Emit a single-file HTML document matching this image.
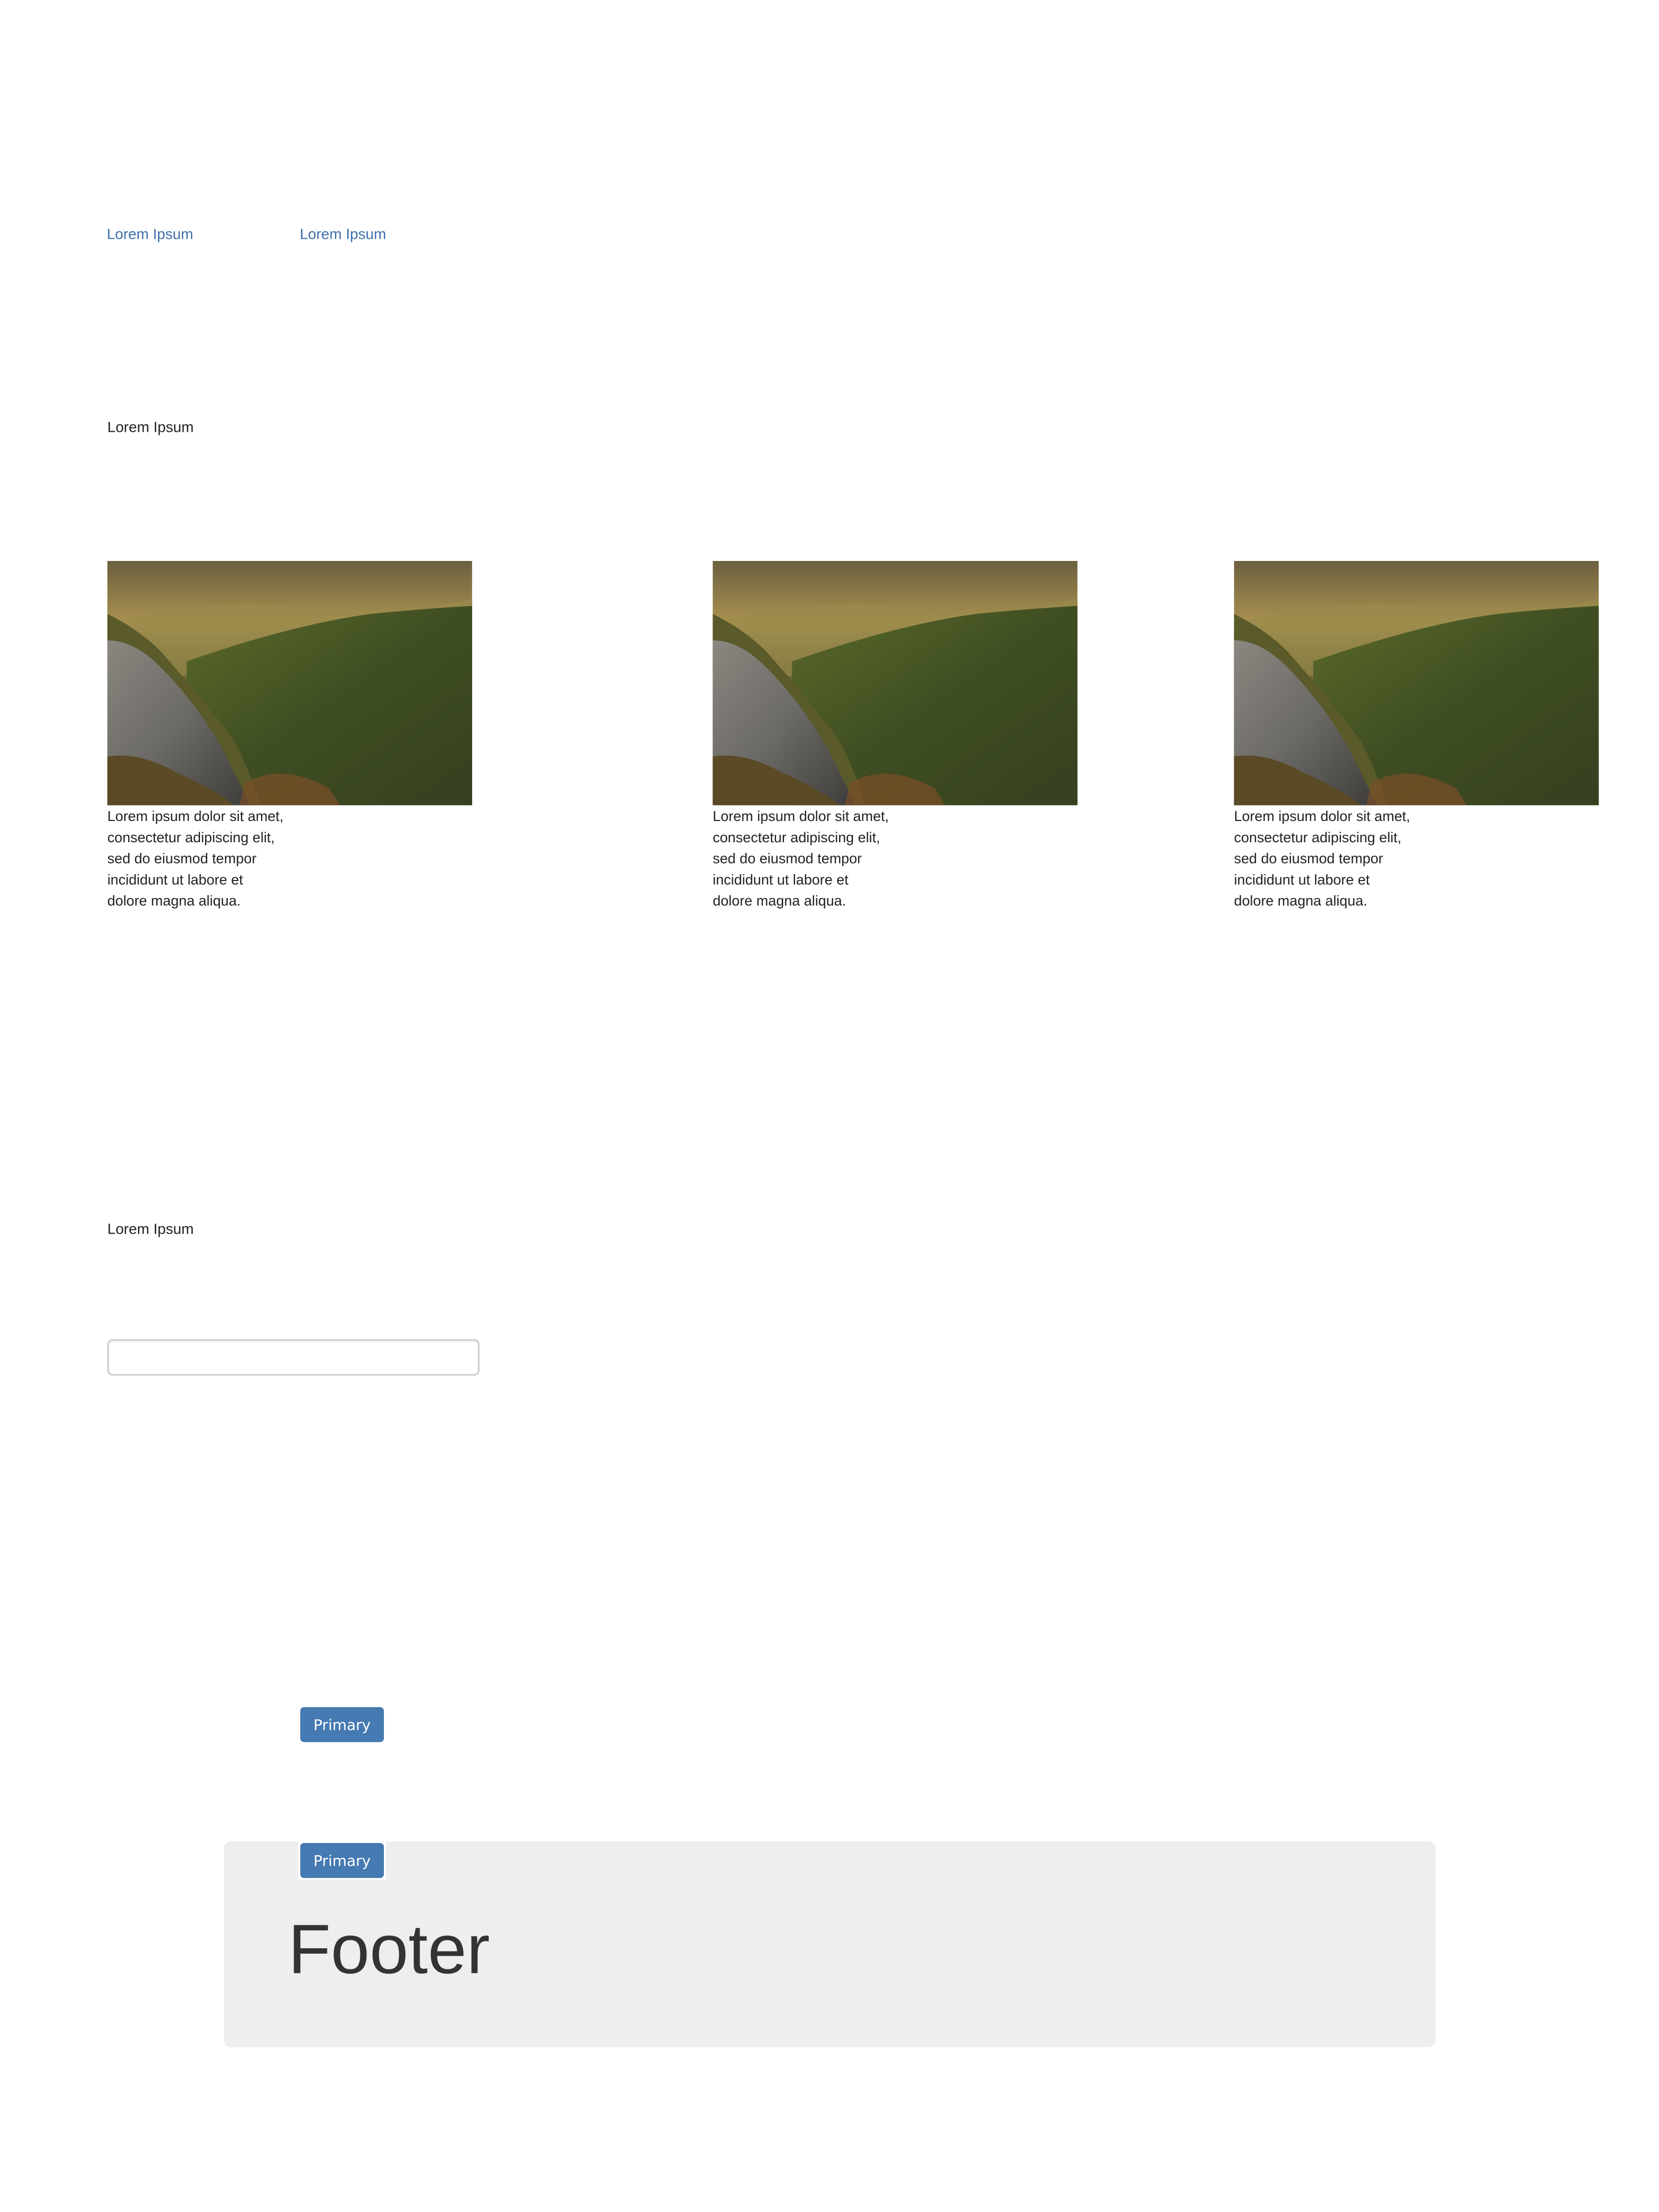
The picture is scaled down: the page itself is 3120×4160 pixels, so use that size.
<!DOCTYPE html>
<html><head><meta charset="utf-8"><style>
body{margin:0;width:3120px;height:4160px;background:#fff;position:relative;font-family:"Liberation Sans",sans-serif;overflow:hidden}
#w{position:absolute;left:0;top:0;width:3120px;height:4160px;transform:scale(0.9943);transform-origin:0 0}
.a{position:absolute}
.link{color:#3d6fa8;font-size:28px;line-height:32px}
.txt{color:#222;font-size:28px;line-height:32px}
.cap{color:#222;font-size:27px;line-height:40px;width:400px}
.img{width:690px;height:462px}
.btn{width:158px;height:66px;background:#457ab2;border:1px solid #3a6a9e;border-radius:7px;color:#fff;font-family:"DejaVu Sans",sans-serif;font-size:28px;line-height:66px;text-align:center;box-sizing:border-box}
</style></head><body><div id="w">
<div class="a link" style="left:202px;top:427px">Lorem Ipsum</div>
<div class="a link" style="left:567px;top:427px">Lorem Ipsum</div>
<div class="a txt" style="left:203px;top:792px">Lorem Ipsum</div>

<svg width="0" height="0" style="position:absolute"><defs>
<linearGradient id="sky" x1="0" y1="0" x2="0" y2="1"><stop offset="0" stop-color="#6b5f3e"/><stop offset="0.25" stop-color="#a8914f"/><stop offset="0.45" stop-color="#6d6a36"/><stop offset="1" stop-color="#3c4222"/></linearGradient>
<linearGradient id="hill" x1="0" y1="0" x2="1" y2="1"><stop offset="0" stop-color="#5c6a2a"/><stop offset="0.5" stop-color="#3f4e22"/><stop offset="1" stop-color="#35401f"/></linearGradient>
<linearGradient id="rock" x1="0" y1="0" x2="1" y2="1"><stop offset="0" stop-color="#8a8780"/><stop offset="0.5" stop-color="#6c6a66"/><stop offset="1" stop-color="#3e3c3a"/></linearGradient>
<g id="scene">
<rect width="690" height="462" fill="url(#sky)"/>
<path d="M0 120 Q200 60 400 90 Q550 110 690 70 L690 160 Q500 150 300 200 Q150 230 0 210Z" fill="#9a8a4c" opacity="0.6"/>
<path d="M150 190 Q350 120 500 100 Q600 90 690 85 L690 462 L150 462Z" fill="url(#hill)"/>
<path d="M0 100 Q60 130 100 170 Q180 260 240 340 Q270 400 290 462 L0 462Z" fill="#5a5a2a"/>
<path d="M0 150 Q50 150 100 200 Q170 270 220 360 Q250 420 270 462 L0 462Z" fill="url(#rock)"/>
<path d="M0 370 Q60 360 130 400 Q200 430 240 462 L0 462Z" fill="#5a4a25"/>
<path d="M260 420 Q330 380 420 430 L440 462 L250 462Z" fill="#7a4e28" opacity="0.7"/>
</g></defs></svg>

<svg class="a img" style="left:203px;top:1061px" viewBox="0 0 690 462"><use href="#scene"/></svg>
<svg class="a img" style="left:1348px;top:1061px" viewBox="0 0 690 462"><use href="#scene"/></svg>
<svg class="a img" style="left:2334px;top:1061px" viewBox="0 0 690 462"><use href="#scene"/></svg>

<div class="a cap" style="left:203px;top:1524px">Lorem ipsum dolor sit amet,<br>consectetur adipiscing elit,<br>sed do eiusmod tempor<br>incididunt ut labore et<br>dolore magna aliqua.</div>
<div class="a cap" style="left:1348px;top:1524px">Lorem ipsum dolor sit amet,<br>consectetur adipiscing elit,<br>sed do eiusmod tempor<br>incididunt ut labore et<br>dolore magna aliqua.</div>
<div class="a cap" style="left:2334px;top:1524px">Lorem ipsum dolor sit amet,<br>consectetur adipiscing elit,<br>sed do eiusmod tempor<br>incididunt ut labore et<br>dolore magna aliqua.</div>

<div class="a txt" style="left:203px;top:2309px">Lorem Ipsum</div>
<div class="a" style="left:203px;top:2533px;width:704px;height:69px;border:3px solid #ccc;border-radius:10px;box-sizing:border-box;box-shadow:inset 0 2px 3px rgba(0,0,0,.08)"></div>

<div class="a btn" style="left:568px;top:3229px">Primary</div>

<div class="a" style="left:424px;top:3483px;width:2291px;height:389px;background:#eee;border-radius:12px"></div>
<div class="a" style="left:564px;top:3483px;width:166px;height:72px;background:#fff"></div>
<div class="a btn" style="left:568px;top:3486px">Primary</div>
<div class="a" style="left:545px;top:3612px;font-size:132px;line-height:150px;color:#333">Footer</div>
</div></body></html>
